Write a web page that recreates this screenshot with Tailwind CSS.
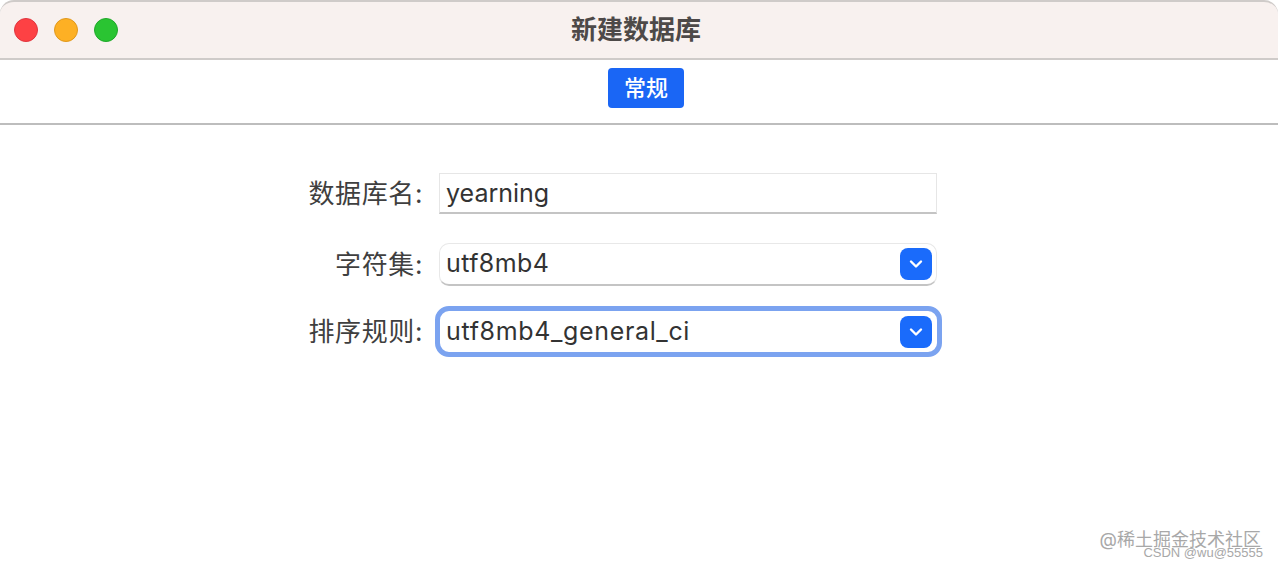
<!DOCTYPE html>
<html lang="zh-CN">
  <head>
    <meta charset="UTF-8" />
    <script src="https://cdn.jsdelivr.net/npm/@tailwindcss/browser@4"></script>
    <title>新建数据库</title>
  </head>

  <body class="relative h-[568px] w-[1278px] overflow-hidden bg-white font-['Inter','Noto_Sans_CJK_SC',sans-serif] text-[#333]">
    <!-- Title bar -->
    <div class="relative flex h-[60px] items-center justify-center rounded-t-[14px] border-t-2 border-b-2 border-[#cfcbc9] bg-[#f8f1ef] pr-[6px]">
      <div class="absolute left-[14px] top-[16px] flex gap-4">
        <span class="size-6 rounded-full border border-[#e0353f] bg-[#fd4144]"></span>
        <span class="size-6 rounded-full border border-[#e0981c] bg-[#fdb024]"></span>
        <span class="size-6 rounded-full border border-[#1fa82a] bg-[#2ac432]"></span>
      </div>
      <h1 class="text-[26px] leading-none font-semibold text-[#4d4948]">新建数据库</h1>
    </div>

    <!-- Tabs -->
    <div class="flex h-[65px] items-start justify-center border-b-2 border-[#bdbdbd] pt-2 pl-[14px]">
      <button class="h-10 w-[76px] rounded-[4px] bg-[#1a66f5] text-[22px] leading-none font-medium text-white">常规</button>
    </div>

    <!-- Form -->
    <form class="ml-[300px] flex w-[642px] flex-col pt-[48px] text-[25px] leading-none">
      <div class="flex items-center">
        <label class="w-[123px] text-right text-[26px] tracking-[0.6px] text-[#3f3f3f]">数据库名:</label>
        <input
          value="yearning"
          class="ml-[16px] h-[41px] w-[498px] border border-[#e6e6e6] border-b-2 border-b-[#c4c4c4] pl-[6px] text-[25px] text-[#333] outline-none"
        />
      </div>

      <div class="mt-[29px] flex items-center">
        <label class="w-[123px] text-right text-[26px] tracking-[0.6px] text-[#3f3f3f]">字符集:</label>
        <div class="ml-[16px] flex h-[43px] w-[498px] items-center justify-between rounded-[10px] border border-[#e8e8e8] border-b-2 border-b-[#c4c4c4] pr-[4px] pl-[6px]">
          <span class="pb-[2px] tracking-[0.4px]">utf8mb4</span>
          <span class="flex size-8 items-center justify-center rounded-[8px] bg-[#1a6bfb]">
            <svg width="14" height="10" viewBox="0 0 14 10" fill="none"><path d="M2 2.5 7 7.5 12 2.5" stroke="white" stroke-width="2.4" stroke-linecap="round" stroke-linejoin="round" /></svg>
          </span>
        </div>
      </div>

      <div class="mt-[20px] flex items-center">
        <label class="w-[123px] text-right text-[26px] tracking-[0.6px] text-[#3f3f3f]">排序规则:</label>
        <div class="ml-[12px] flex h-[51px] w-[507px] items-center justify-between rounded-[14px] border-[5px] border-[#7ba3f0] bg-white pr-[4px] pl-[6px]">
          <span class="tracking-[0.65px]">utf8mb4_general_ci</span>
          <span class="mr-px flex size-8 items-center justify-center rounded-[8px] bg-[#1a6bfb]">
            <svg width="14" height="10" viewBox="0 0 14 10" fill="none"><path d="M2 2.5 7 7.5 12 2.5" stroke="white" stroke-width="2.4" stroke-linecap="round" stroke-linejoin="round" /></svg>
          </span>
        </div>
      </div>
    </form>

    <!-- Watermarks -->
    <div class="absolute top-[531px] right-[17px] text-[18px] leading-none text-[#a8a8a8]">@稀土掘金技术社区</div>
    <div class="absolute top-[546px] right-[15px] font-['Liberation_Sans',sans-serif] text-[13px] leading-none text-[#a8a8a8]">CSDN @wu@55555</div>
  </body>
</html>
